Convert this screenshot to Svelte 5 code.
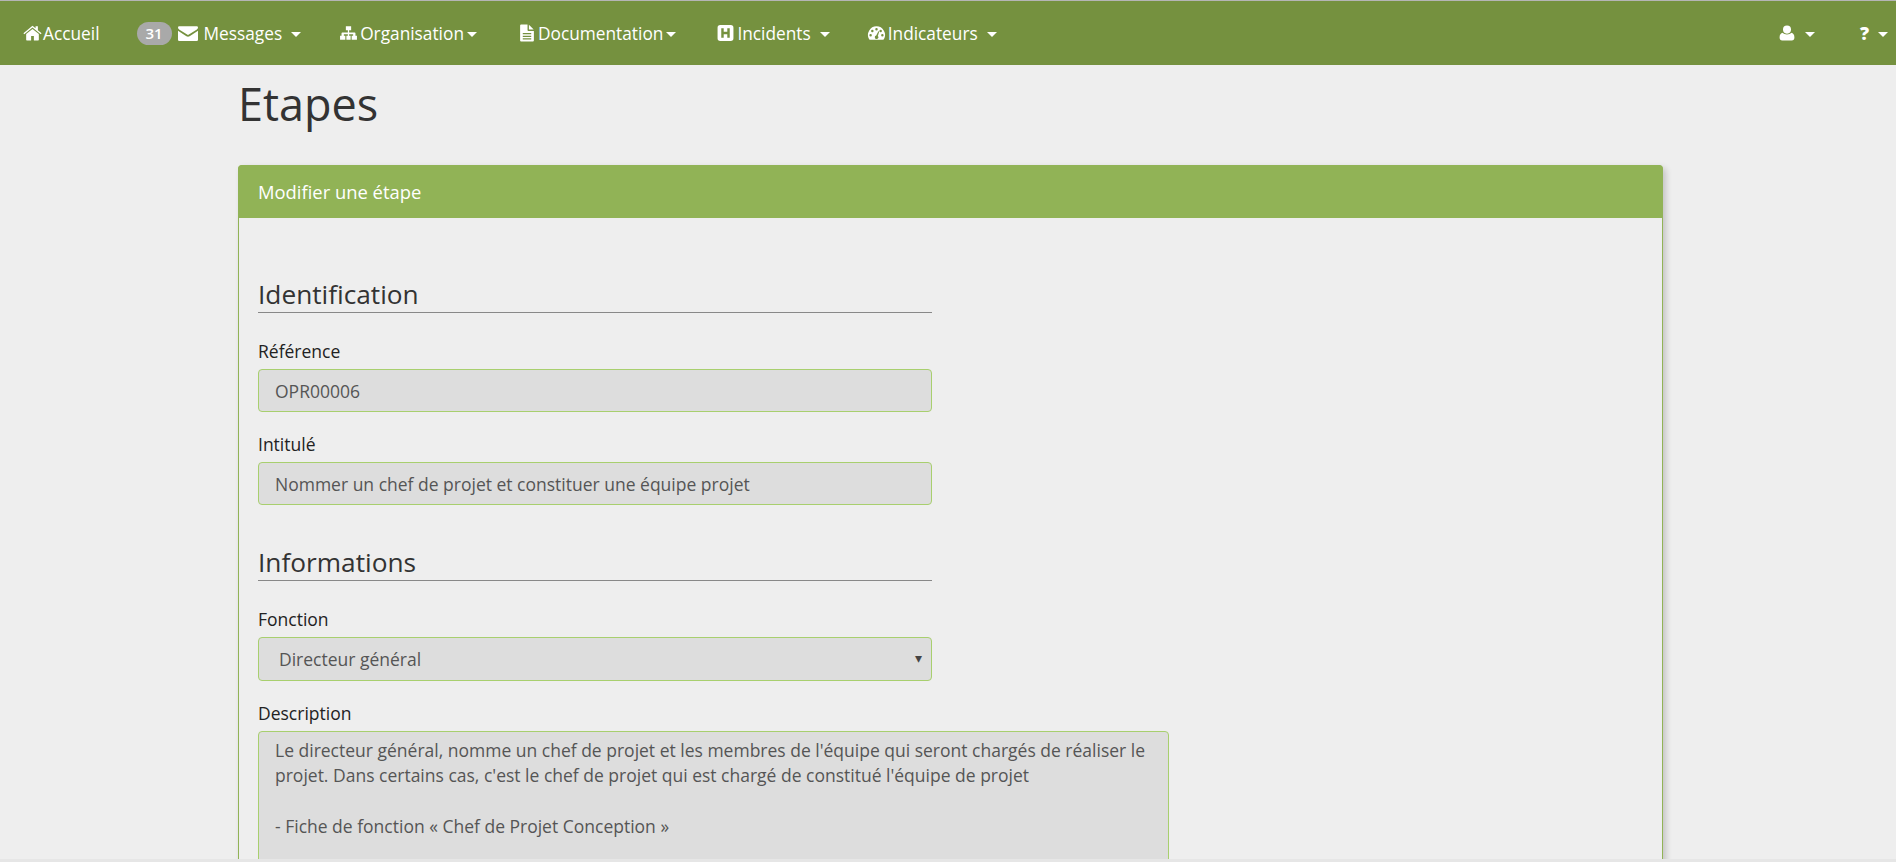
<script>
    let nav = [
        { label: 'Messages', icon: 'envelope', badge: 31, caret: true, spaced: true },
        { label: 'Organisation', icon: 'sitemap', caret: true },
        { label: 'Documentation', icon: 'file', caret: true },
        { label: 'Incidents', icon: 'hsquare', caret: true, spaced: true },
        { label: 'Indicateurs', icon: 'dashboard', caret: true, spaced: true }
    ];

    const paths = {
        home: 'M15 9.5V15a.7.7 0 0 1-.7.7h-4V11.4H7.7v4.3h-4A.7.7 0 0 1 3 15V9.5L9 4.6zM17.6 8.7l-.8.9-7.8-6.4-7.8 6.4-.8-.9L9 1.6l2.9 2.4V2h2.2v3.8z',
        envelope: 'M0 3.2A1.2 1.2 0 0 1 1.2 2h16.6A1.2 1.2 0 0 1 19 3.2c0 .9-.7 1.6-1.4 2.1L10.3 10c-.5.4-1.1.4-1.6 0L1.4 5.3C.7 4.8 0 4.1 0 3.2zM0 6.4l8 5.2c.9.6 2.1.6 3 0l8-5.2v8.4a1.2 1.2 0 0 1-1.2 1.2H1.2A1.2 1.2 0 0 1 0 14.8z',
        sitemap: 'M6.5 2h5v4H9.6v2h5.2a.8.8 0 0 1 .8.8V11H17v4h-5v-4h1.4V9.6H9.6V11H11v4H7v-4h1.4V9.6H4.6V11H6v4H1v-4h1.4V8.8a.8.8 0 0 1 .8-.8h5.2V6H6.500z',
        file: 'M1 1.500A1 1 0 0 1 2 .5h6v5.200a.8.8 0 0 0 .8.8H14v9a1 1 0 0 1-1 1H2a1 1 0 0 1-1-1zM9.300.7 13.800 5.200H9.300zM3.500 8.500v1.200h8V8.500zM3.500 11v1.200h8V11zM3.500 13.500v1.200h8v-1.200z',
        hsquare: 'M3 1h10a2.500 2.500 0 0 1 2.500 2.500v10A2.500 2.500 0 0 1 13 16H3A2.500 2.500 0 0 1 .5 13.500v-10A2.500 2.500 0 0 1 3 1zM4 4v9h2.300V9.600h3.400V13H12V4H9.700v3.400H6.300V4z',
        dashboard: 'M9 2.500a9 9 0 0 0-7.800 13.500c.2.300.5.500.9.500h13.800c.4 0 .7-.2.900-.5A9 9 0 0 0 9 2.500zM9 4.300a1.300 1.300 0 1 1 0 2.600 1.300 1.300 0 0 1 0-2.600zM4.600 6.200a1.300 1.300 0 1 1 0 2.600 1.300 1.300 0 0 1 0-2.600zM13.400 6.200a1.300 1.300 0 1 1 0 2.600 1.300 1.300 0 0 1 0-2.600zM2.800 10.500a1.300 1.300 0 1 1 0 2.600 1.300 1.300 0 0 1 0-2.600zM15.200 10.500a1.300 1.300 0 1 1 0 2.600 1.300 1.300 0 0 1 0-2.600zM11 7.600l.9.400-1.500 4.700a1.800 1.800 0 1 1-1.700-.5z',
        user: 'M7.500 1.500a3.800 3.800 0 0 1 3.800 3.800 3.800 3.800 0 0 1-7.600 0A3.800 3.800 0 0 1 7.500 1.500zM3.400 8.300c1 1 2.500 1.500 4.100 1.500s3.100-.5 4.100-1.500c1.700.3 2.900 1.800 2.900 4.400 0 1.700-.9 2.800-2.500 2.800H3c-1.600 0-2.500-1.100-2.500-2.800 0-2.600 1.200-4.100 2.900-4.400z'
    };
</script>

<div class="page">
    <nav class="navbar">
        <a class="nav-item home">
            <svg class="ico" width="19" height="18" viewBox="0 0 18 17"><path d={paths.home} /></svg>
            <span>Accueil</span>
        </a>
        {#each nav as item}
            <a class="nav-item {item.icon}">
                {#if item.badge}<span class="badge">{item.badge}</span>{/if}
                {#if item.icon === 'envelope'}
                    <svg class="ico" width="20" height="18" viewBox="0 0 19 17"><path d={paths.envelope} /></svg>
                {:else if item.icon === 'sitemap'}
                    <svg class="ico" width="19" height="18" viewBox="0 0 18 17"><path d={paths.sitemap} /></svg>
                {:else if item.icon === 'file'}
                    <svg class="ico" width="16" height="18" viewBox="0 0 15 17"><path d={paths.file} /></svg>
                {:else if item.icon === 'hsquare'}
                    <svg class="ico" width="17" height="18" viewBox="0 0 16 17"><path fill-rule="evenodd" d={paths.hsquare} /></svg>
                {:else}
                    <svg class="ico" width="19" height="18" viewBox="0 0 18 19"><path fill-rule="evenodd" d={paths.dashboard} /></svg>
                {/if}
                <span>{item.label}</span>
                <i class="caret" class:wide={item.spaced}></i>
            </a>
        {/each}
        <div class="nav-right">
            <a class="nav-item user">
                <svg class="ico" width="16" height="18" viewBox="0 0 15 17"><path d={paths.user} /></svg>
                <i class="caret wide"></i>
            </a>
            <a class="nav-item help">
                <b class="question">?</b>
                <i class="caret wide"></i>
            </a>
        </div>
    </nav>

    <main class="container">
        <h1>Etapes</h1>
        <section class="panel">
            <header class="panel-heading">Modifier une étape</header>
            <div class="panel-body">
                <fieldset>
                    <legend>Identification</legend>
                    <label for="ref">Référence</label>
                    <input id="ref" value="OPR00006" readonly />
                    <label for="intitule">Intitulé</label>
                    <input id="intitule" value="Nommer un chef de projet et constituer une équipe projet" readonly />
                </fieldset>
                <fieldset class="infos">
                    <legend>Informations</legend>
                    <label for="fonction">Fonction</label>
                    <div class="select-wrap">
                        <select id="fonction" disabled>
                            <option>Directeur général</option>
                        </select>
                        <span class="arrow">▾</span>
                    </div>
                    <label for="desc">Description</label>
                    <textarea id="desc" readonly>Le directeur général, nomme un chef de projet et les membres de l'équipe qui seront chargés de réaliser le projet. Dans certains cas, c'est le chef de projet qui est chargé de constitué l'équipe de projet

- Fiche de fonction « Chef de Projet Conception »</textarea>
                </fieldset>
            </div>
        </section>
    </main>
    <div class="window-edge"></div>
</div>

<style>
    :global(body) {
        margin: 0;
        background: #eeeeee;
        overflow: hidden;
    }

    .page {
        position: relative;
        height: 862px;
        overflow: hidden;
        font-family: "Open Sans", sans-serif;
        font-size: 17.3px;
        color: #333;
    }

    .navbar {
        display: flex;
        align-items: center;
        height: 64px;
        border-top: 1px solid #b5b5b5;
        background: #75913f;
        padding-left: 8px;
        color: #fff;
    }

    .nav-item {
        display: flex;
        align-items: center;
        height: 100%;
        padding: 0 15px;
        margin-right: 10px;
        white-space: nowrap;
    }

    .home { margin-right: 7px; }
    .envelope { margin-right: 8px; }
    .sitemap { margin-right: 12px; }
    .file { margin-right: 11px; }
    .hsquare { margin-right: 7px; }

    .nav-right {
        display: flex;
        align-items: center;
        height: 100%;
        margin-left: auto;
    }

    .nav-right .nav-item {
        margin: 0;
        padding: 0 8px 0 0;
    }

    .user { margin-right: 37px !important; }

    .ico {
        fill: #fff;
        margin-right: 1px;
        flex: none;
    }

    .envelope .ico { margin: 0 6px 0 6px; }
    .sitemap .ico { margin-right: 2px; }
    .file .ico { margin-right: 3px; }
    .hsquare .ico { margin-right: 3px; }
    .dashboard .ico { margin-right: 2px; }

    .badge {
        display: inline-block;
        width: 35px;
        height: 23px;
        line-height: 23px;
        border-radius: 12px;
        background: #a9a9a9;
        text-align: center;
        font-size: 15px;
        font-weight: 600;
    }

    .caret {
        width: 0;
        height: 0;
        margin-left: 3px;
        margin-top: 2px;
        border-top: 5px solid #fff;
        border-left: 5px solid transparent;
        border-right: 5px solid transparent;
    }

    .caret.wide { margin-left: 9px; }

    .question {
        font-size: 18px;
        font-weight: 800;
    }

    .container {
        width: 1425px;
        margin-left: 238px;
        font-size: 17.5px;
    }

    h1 {
        margin: 11px 0 33px;
        height: 56px;
        line-height: 56px;
        font-size: 45px;
        font-weight: 400;
        color: #333;
    }

    .panel {
        border: 1px solid #91b356;
        border-radius: 4px;
        box-shadow: 3px 3px 6px rgba(0, 0, 0, 0.18);
    }

    .panel-heading {
        height: 53px;
        line-height: 53px;
        padding-left: 20px;
        margin: -1px -1px 0;
        border-radius: 4px 4px 0 0;
        background: #91b356;
        color: #fff;
        font-size: 18.4px;
    }

    .panel-body {
        padding: 55px 19px 0;
    }

    fieldset {
        border: 0;
        margin: 0;
        padding: 0;
        display: flex;
        flex-direction: column;
        align-items: flex-start;
    }

    .infos { margin-top: 36px; }

    legend {
        display: block;
        box-sizing: border-box;
        width: 674px;
        padding: 0;
        height: 40px;
        line-height: 42px;
        font-size: 26.25px;
        font-weight: 400;
        color: #333;
        border-bottom: 1px solid #888;
    }

    label {
        display: block;
        height: 22px;
        line-height: 22px;
        margin: 27px 0 7px;
        font-size: 17.5px;
        color: #222;
    }

    input + label, .select-wrap + label { margin-top: 21px; }

    input, select, textarea {
        box-sizing: border-box;
        width: 674px;
        height: 43px;
        border: 1px solid #a8cf6e;
        border-radius: 4px;
        background: #dddddd;
        color: #555;
        font-family: "Open Sans", sans-serif;
        font-size: 17.5px;
        outline: none;
        opacity: 1;
    }

    input { padding: 0 16px; }

    .select-wrap {
        position: relative;
    }

    select {
        display: block;
        height: 44px;
        padding: 0 20px;
        appearance: none;
    }

    .arrow {
        position: absolute;
        right: 10px;
        top: 13px;
        font-size: 14px;
        color: #444;
        font-family: "DejaVu Sans", sans-serif;
    }

    textarea {
        width: 911px;
        height: 220px;
        padding: 6px 16px;
        line-height: 25.4px;
        resize: none;
        overflow: hidden;
    }

    .window-edge {
        position: absolute;
        left: 0;
        right: 0;
        bottom: 0;
        height: 3px;
        background: #e6e6e6;
    }
</style>
